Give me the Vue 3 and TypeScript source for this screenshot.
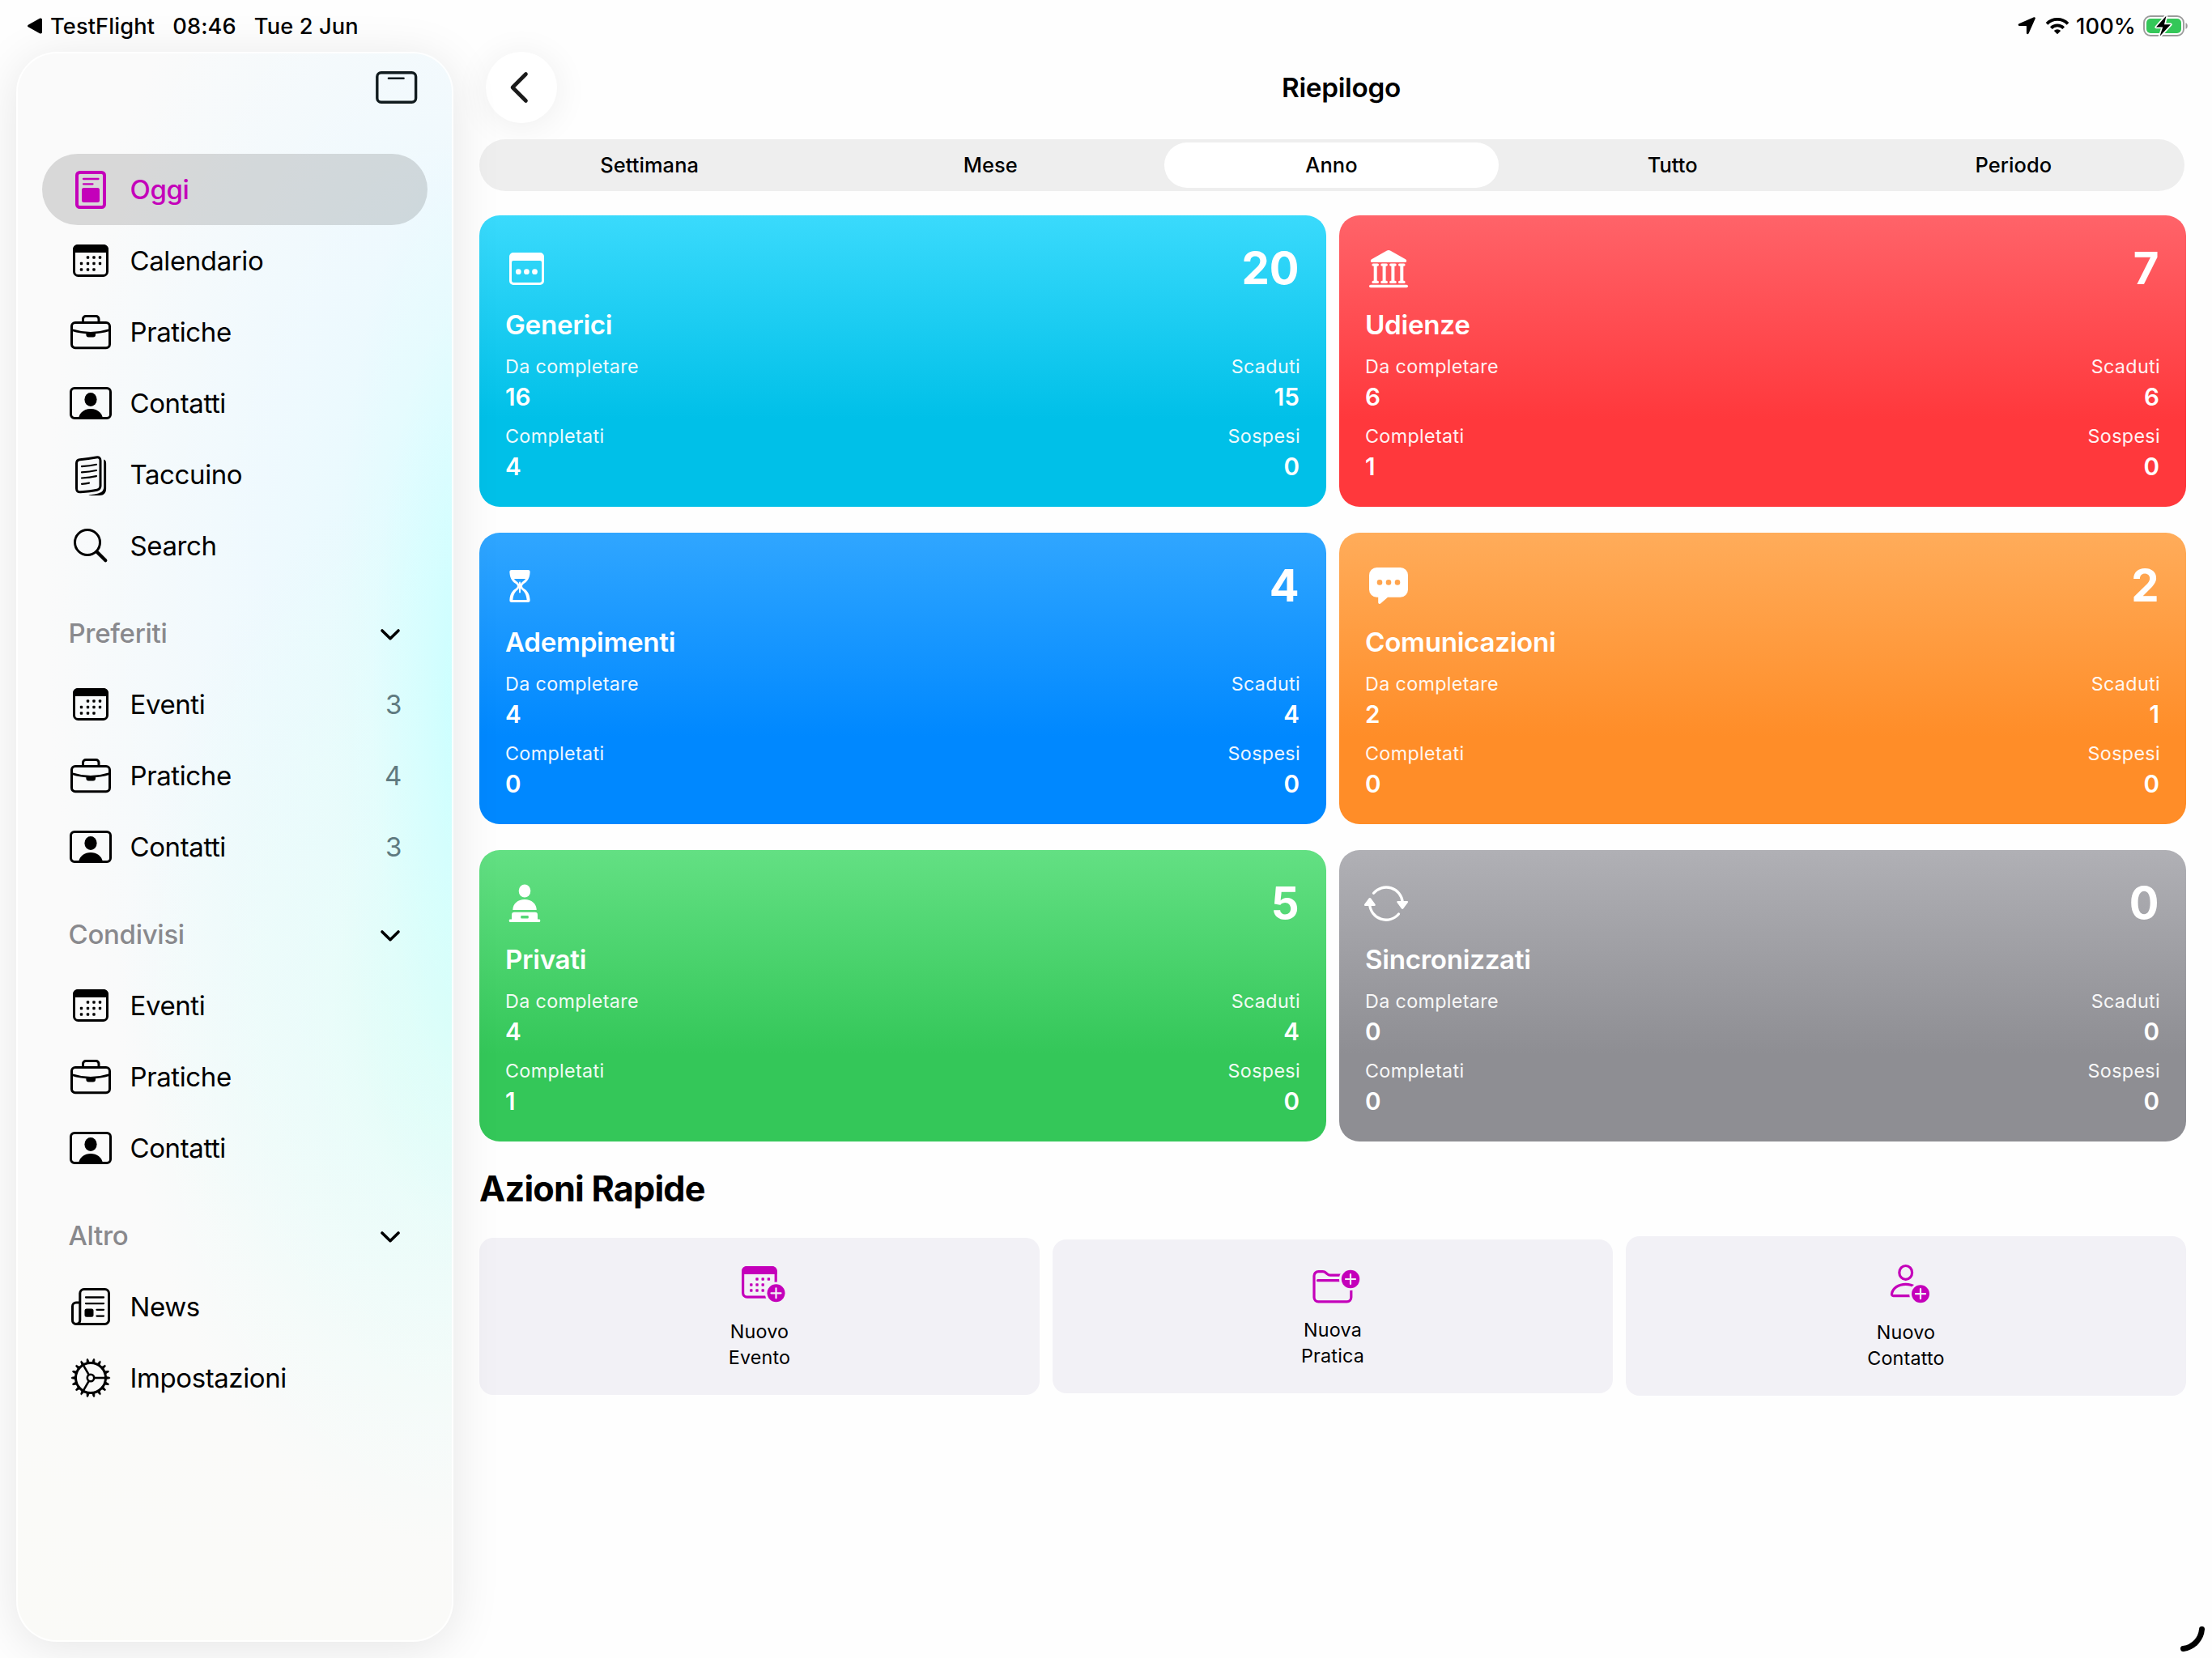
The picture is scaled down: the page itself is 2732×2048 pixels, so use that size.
<script setup lang="ts">
interface NavItem {
  icon: string
  label: string
  count?: number
  active?: boolean
}

interface NavSection {
  title?: string
  items: NavItem[]
}

interface SummaryCard {
  icon: string
  title: string
  tone: string
  total: number
  todo: number
  overdue: number
  done: number
  paused: number
}

const sections: NavSection[] = [
  {
    items: [
      { icon: 'today', label: 'Oggi', active: true },
      { icon: 'calendar', label: 'Calendario' },
      { icon: 'briefcase', label: 'Pratiche' },
      { icon: 'contact', label: 'Contatti' },
      { icon: 'notebook', label: 'Taccuino' },
      { icon: 'search', label: 'Search' },
    ],
  },
  {
    title: 'Preferiti',
    items: [
      { icon: 'calendar', label: 'Eventi', count: 3 },
      { icon: 'briefcase', label: 'Pratiche', count: 4 },
      { icon: 'contact', label: 'Contatti', count: 3 },
    ],
  },
  {
    title: 'Condivisi',
    items: [
      { icon: 'calendar', label: 'Eventi' },
      { icon: 'briefcase', label: 'Pratiche' },
      { icon: 'contact', label: 'Contatti' },
    ],
  },
  {
    title: 'Altro',
    items: [
      { icon: 'news', label: 'News' },
      { icon: 'gear', label: 'Impostazioni' },
    ],
  },
]

const periods: string[] = ['Settimana', 'Mese', 'Anno', 'Tutto', 'Periodo']
const selectedPeriod = 'Anno'

const cards: SummaryCard[] = [
  { icon: 'generic', title: 'Generici', tone: 'cyan', total: 20, todo: 16, overdue: 15, done: 4, paused: 0 },
  { icon: 'court', title: 'Udienze', tone: 'red', total: 7, todo: 6, overdue: 6, done: 1, paused: 0 },
  { icon: 'hourglass', title: 'Adempimenti', tone: 'blue', total: 4, todo: 4, overdue: 4, done: 0, paused: 0 },
  { icon: 'bubble', title: 'Comunicazioni', tone: 'orange', total: 2, todo: 2, overdue: 1, done: 0, paused: 0 },
  { icon: 'person', title: 'Privati', tone: 'green', total: 5, todo: 4, overdue: 4, done: 1, paused: 0 },
  { icon: 'sync', title: 'Sincronizzati', tone: 'gray', total: 0, todo: 0, overdue: 0, done: 0, paused: 0 },
]

const calendarDots: [number, number][] = [
  [24.5, 24], [32, 24], [39.5, 24],
  [16.5, 31.5], [24.5, 31.5], [32, 31.5], [39.5, 31.5],
  [16.5, 39], [24.5, 39], [32, 39],
]

const eventDots: [number, number][] = [
  [23, 20], [30.2, 20], [37.4, 20],
  [15.8, 27], [23, 27], [30.2, 27],
  [15.8, 34], [23, 34], [30.2, 34],
]

const gearTeeth: number[] = Array.from({ length: 18 }, (_, i) => i * 20)
const columns: number[] = [12.7, 23.6, 34.4, 45.3]
</script>

<template>
  <div class="screen">
    <header class="status">
      <div class="status-left">
        <svg class="back-app" width="18" height="20" viewBox="0 0 18 20"><path d="M1.2 8.4 15 .8c1.6-.8 3 0 3 1.7v15c0 1.700-1.400 2.500-3 1.700L1.200 11.600C-.4 10.700-.4 9.300 1.200 8.400z" /></svg>
        <span class="st-app">TestFlight</span>
        <span class="st-time">08:46</span>
        <span class="st-date">Tue 2 Jun</span>
      </div>
      <div class="status-right">
        <svg class="loc" width="22" height="22" viewBox="0 0 22 22"><path d="M20 .3c1.200-.5 2.200.5 1.700 1.700L13.600 20.300c-.7 1.500-2.700 1.200-2.700-.5V11.600c0-.4-.2-.6-.6-.6H2.100C.4 11 .1 9 1.600 8.300z" /></svg>
        <svg class="wifi" width="30" height="22" viewBox="0 0 30 22">
          <path d="M2 8.300a18.500 18.500 0 0 1 26 0" fill="none" stroke="#000" stroke-width="3.800" />
          <path d="M7.300 13.600a11 11 0 0 1 15.400 0" fill="none" stroke="#000" stroke-width="3.800" />
          <path d="M10.800 17a6 6 0 0 1 8.400 0L15 21.200z" />
        </svg>
        <span class="st-pct">100%</span>
        <svg class="battery" width="56" height="28" viewBox="0 0 56 28">
          <rect x="1" y="2" width="49" height="24" rx="8" fill="none" stroke="#9b9b9b" stroke-width="1.900" />
          <path d="M52.500 10.200c3 1 3 6.600 0 7.600z" fill="#9b9b9b" />
          <rect x="4" y="5" width="43" height="18" rx="5" fill="#34c759" />
          <path d="M28.500 1.500 16 15.600h8.200L20.500 26.800 34 12.300h-8z" fill="#000" stroke="#fff" stroke-width="3.400" stroke-linejoin="round" paint-order="stroke" />
        </svg>
      </div>
    </header>

    <div class="body">
      <aside class="sidebar">
        <div class="side-head">
          <svg width="52" height="40" viewBox="0 0 52 40" fill="none" stroke="#111b1e">
            <rect x="1.800" y="1.800" width="47.800" height="36.400" rx="5" stroke-width="3.400" />
            <path d="M16 8.700h18.500" stroke-width="2.600" stroke-linecap="round" />
          </svg>
        </div>
        <section v-for="(section, si) in sections" :key="si">
          <div v-if="section.title" class="section-title">
            <span>{{ section.title }}</span>
            <svg width="24" height="14" viewBox="0 0 24 14" fill="none" stroke="#000" stroke-width="3.600" stroke-linecap="round" stroke-linejoin="round"><path d="M2 2l10 9.700L22 2" /></svg>
          </div>
          <div v-for="item in section.items" :key="item.label" class="nav" :class="{ active: item.active }">
            <svg class="nav-icon" width="56" height="56" viewBox="0 0 56 56" fill="none" stroke="currentColor" stroke-width="3" stroke-linecap="round" stroke-linejoin="round">
              <template v-if="item.icon === 'today'">
                <rect x="11" y="7" width="34" height="43" rx="3.500" stroke-width="4" />
                <path d="M19 15h18.500M19 21.300h11.500" stroke-width="2.300" />
                <rect x="17" y="26" width="22" height="18" rx="2.500" fill="currentColor" stroke="none" />
              </template>
              <template v-else-if="item.icon === 'calendar'">
                <rect x="7.500" y="9.500" width="41" height="37" rx="5" />
                <path d="M6 18v-4a6 6 0 0 1 6-6h32a6 6 0 0 1 6 6v4z" fill="currentColor" stroke="none" />
                <rect v-for="(d, i) in calendarDots" :key="i" :x="d[0] - 1.7" :y="d[1] - 1.7" width="3.400" height="3.400" rx="1" fill="currentColor" stroke="none" />
              </template>
              <template v-else-if="item.icon === 'briefcase'">
                <rect x="4.500" y="16.500" width="47" height="31.200" rx="4.500" />
                <path d="M18.500 16v-4a3.500 3.500 0 0 1 3.500-3.500h12.500a3.500 3.500 0 0 1 3.500 3.500v4" stroke-linecap="butt" />
                <path d="M4.500 25.500q23.500 7.500 47 0" stroke-width="2.600" />
                <path d="M22.400 28.500h11.600v3a3 3 0 0 1-3 3h-5.600a3 3 0 0 1-3-3z" fill="currentColor" stroke="none" />
              </template>
              <template v-else-if="item.icon === 'contact'">
                <rect x="3.500" y="9.500" width="49" height="37" rx="4.500" />
                <ellipse cx="28" cy="23.500" rx="7.600" ry="8.400" fill="currentColor" stroke="none" />
                <path d="M13 46.500c1.500-7.500 7.500-11.600 15-11.600s13.500 4.100 15 11.600z" fill="currentColor" stroke="none" />
              </template>
              <template v-else-if="item.icon === 'notebook'">
                <path d="M10.500 14.300c0-3 1.200-4.300 4.200-4.600 8-.7 13.300-1.400 20-2.700 3.500-.7 5.300.6 5.300 4v31c0 3-1.200 4.500-4.200 5.200-6.500 1.500-13 2.100-20.300 2.500-3.500.2-5-1.200-5-4.400z" />
                <path d="M44.200 9.500c2.200.8 2.900 2.400 2.900 5V45.500c0 5.500-2.800 8.500-8.300 8.500H25.500c0-.8 6-1.100 11.700-2.600 5-1.300 7-3.800 7-8.400z" fill="currentColor" stroke="none" />
                <path d="M17 18.200q10-.6 18-2.400M17 25.400q10-.6 18-2.400M17 32.500q10-.6 18-2.400M17 39.800q5-.2 9-1.200" stroke-width="2.200" />
              </template>
              <template v-else-if="item.icon === 'search'">
                <circle cx="24" cy="24" r="15.500" />
                <path d="M35.500 35.500 46.300 46.300" stroke-width="4.200" />
              </template>
              <template v-else-if="item.icon === 'news'">
                <path d="M9.500 49.500c4 0 5.300-2 5.300-5V11.500a5 5 0 0 1 5-5h25.700a5 5 0 0 1 5 5v33a5 5 0 0 1-5 5zM14.500 23h-4.500a4.500 4.500 0 0 0-4.500 4.500v17a4.500 4.500 0 0 0 4.500 5" />
                <path d="M22 16.500h22M22 24.100h22M35.500 31.800h8.500M35.500 39.600h8.500" stroke-width="2.300" />
                <rect x="20.500" y="30.600" width="11" height="10.200" rx="2.500" fill="currentColor" stroke="none" />
              </template>
              <template v-else>
                <circle cx="28" cy="28" r="18.500" />
                <circle cx="28" cy="28" r="4.200" stroke-width="2.600" />
                <path v-for="a in [0, 120, 240]" :key="'s' + a" d="M32.500 28h13" stroke-width="2.600" stroke-linecap="butt" :transform="`rotate(${a} 28 28)`" />
                <path v-for="a in gearTeeth" :key="a" d="M47 26.400l4 .8a.8.800 0 0 1 0 1.600l-4 .8z" fill="currentColor" stroke-width=".8" :transform="`rotate(${a} 28 28)`" />
              </template>
            </svg>
            <span class="nav-label">{{ item.label }}</span>
            <span v-if="item.count !== undefined" class="nav-count">{{ item.count }}</span>
          </div>
        </section>
      </aside>

      <main class="main">
        <div class="titlebar">
          <div class="back">
            <svg width="24" height="40" viewBox="0 0 24 40" fill="none" stroke="#1a1a1a" stroke-width="4.600" stroke-linecap="round" stroke-linejoin="round"><path d="M20.500 3.500 4 20l16.500 16.500" /></svg>
          </div>
          <h1>Riepilogo</h1>
        </div>

        <div class="segments">
          <div v-for="p in periods" :key="p" class="segment" :class="{ on: p === selectedPeriod }">{{ p }}</div>
        </div>

        <div class="cards">
          <article v-for="c in cards" :key="c.title" class="card" :class="c.tone">
            <div class="card-top">
              <svg width="60" height="68" viewBox="0 0 60 68" fill="#fff">
                <template v-if="c.icon === 'generic'">
                  <path fill-rule="evenodd" d="M10 14h33a5 5 0 0 1 5 5v30a5 5 0 0 1-5 5H10a5 5 0 0 1-5-5V19a5 5 0 0 1 5-5zm0 10a2 2 0 0 0-2 2v22.500a2.500 2.500 0 0 0 2.500 2.500h32a2.500 2.500 0 0 0 2.500-2.500V26a2 2 0 0 0-2-2z" />
                  <circle v-for="x in [16.300, 26.400, 36.500]" :key="x" :cx="x" cy="37.700" r="3.400" />
                </template>
                <template v-else-if="c.icon === 'court'">
                  <path d="M27 11.600q2-1.200 4 0l19 10.700q1.400.8 1.200 2.200-.2 1.500-1.700 1.500H8.500q-1.500 0-1.700-1.500-.2-1.400 1.200-2.200z" />
                  <g v-for="x in columns" :key="x">
                    <rect :x="x - 4.300" y="27.500" width="8.600" height="3.200" rx="1.600" />
                    <rect :x="x - 2" y="29" width="4" height="22" />
                    <rect :x="x - 4.300" y="48.800" width="8.600" height="3.200" rx="1.600" />
                  </g>
                  <rect x="5" y="53.700" width="48" height="3.600" rx="1.800" />
                </template>
                <template v-else-if="c.icon === 'hourglass'">
                  <path fill-rule="evenodd" d="M8 14h20c2 0 2.800 1.200 2.600 3-.5 8-3.600 11.500-7.600 14-2.600 1.700-2.600 4.300 0 6 4 2.500 7.100 6 7.600 14 .2 1.800-.6 3-2.600 3H8c-2 0-2.800-1.200-2.600-3 .5-8 3.600-11.500 7.600-14 2.600-1.700 2.600-4.300 0-6-4-2.500-7.100-6-7.600-14C5.200 15.200 6 14 8 14zm2.900 11c1.300 1.700 2.800 2.800 4.500 4.200 2.700 2.300 2.700 7.100 0 9.400-3.200 2.700-5.200 5.400-6 11.900q-.1.500.5.500h16.200q.6 0 .5-.5c-.8-6.500-2.800-9.200-6-11.900-2.700-2.300-2.700-7.100 0-9.400 1.700-1.400 3.200-2.500 4.500-4.200z" />
                  <rect x="17" y="28.500" width="2" height="14" rx="1" />
                </template>
                <template v-else-if="c.icon === 'bubble'">
                  <path fill-rule="evenodd" d="M14.500 11h29a9.500 9.500 0 0 1 9.500 9.500v17.700a9.500 9.500 0 0 1-9.500 9.500H28l-8.600 7.600c-1.500 1.300-3.200.6-3.200-1.300v-6.300h-1.700A9.500 9.500 0 0 1 5 38.200V20.500A9.500 9.500 0 0 1 14.500 11zM18 26.100a3.300 3.300 0 1 0 0 6.600 3.300 3.300 0 0 0 0-6.600zm11 0a3.300 3.300 0 1 0 0 6.600 3.300 3.300 0 0 0 0-6.600zm11 0a3.300 3.300 0 1 0 0 6.600 3.300 3.300 0 0 0 0-6.600z" />
                </template>
                <template v-else-if="c.icon === 'person'">
                  <ellipse cx="24" cy="18.500" rx="7.300" ry="8" />
                  <path d="M9.300 41.900c0-7.500 6.200-12.900 14.700-12.900s14.700 5.400 14.700 12.900z" />
                  <path fill-rule="evenodd" d="M11.200 44.700h25.600a3.200 3.200 0 0 1 3.200 3.200v5.600h1.700c1 0 1.600.7 1.600 1.700s-.6 1.800-1.600 1.800H6.300c-1 0-1.600-.8-1.600-1.800s.6-1.700 1.600-1.700H8v-5.600a3.200 3.200 0 0 1 3.200-3.200zm9 4.300a1 1 0 0 0-1 1v1.600a1 1 0 0 0 1 1h7.600a1 1 0 0 0 1-1V50a1 1 0 0 0-1-1z" />
                </template>
                <template v-else>
                  <path d="M10.500 21.300a20.300 20.300 0 0 1 35.800 11.200M41.500 47a20.300 20.300 0 0 1-35.800-12" fill="none" stroke="#fff" stroke-width="3.300" stroke-linecap="round" />
                  <path d="M47.300 40.300q-1.200 1.400-2.400 0l-5.300-7.200q-1.200-2 .9-2.100h11.300q2.100.1.900 2.100zM4.700 27.600q1.200-1.400 2.400 0l5.300 7.200q1.200 2-.9 2.100H.2q-2.100-.1-.9-2.100z" />
                </template>
              </svg>
              <strong class="total">{{ c.total }}</strong>
            </div>
            <h2>{{ c.title }}</h2>
            <div class="stats">
              <div class="stat"><span class="k">Da completare</span><span class="v">{{ c.todo }}</span></div>
              <div class="stat end"><span class="k">Scaduti</span><span class="v">{{ c.overdue }}</span></div>
              <div class="stat"><span class="k">Completati</span><span class="v">{{ c.done }}</span></div>
              <div class="stat end"><span class="k">Sospesi</span><span class="v">{{ c.paused }}</span></div>
            </div>
          </article>
        </div>

        <h3>Azioni Rapide</h3>
        <div class="quick">
          <div class="action event">
            <svg width="52" height="52" viewBox="0 0 52 52">
              <rect x="5.600" y="5.600" width="40.600" height="36.500" rx="5" fill="none" stroke="#c400ba" stroke-width="3.200" />
              <path d="M4 14V10a6 6 0 0 1 6-6h31.800a6 6 0 0 1 6 6v4z" fill="#c400ba" />
              <rect v-for="(d, i) in eventDots" :key="i" :x="d[0] - 1.7" :y="d[1] - 1.7" width="3.400" height="3.400" rx=".8" fill="#c400ba" />
              <circle cx="46.500" cy="37.300" r="13.800" fill="#f2f1f6" />
              <circle cx="46.500" cy="37.300" r="11" fill="#c400ba" />
              <path d="M46.500 31.300v12M40.500 37.300h12" stroke="#f2f1f6" stroke-width="2.200" stroke-linecap="round" />
            </svg>
            <p>Nuovo<br />Evento</p>
          </div>
          <div class="action file">
            <svg width="60" height="46" viewBox="0 0 60 46">
              <path d="M11.500 17.700H50M7 38.500V12a5.300 5.300 0 0 1 5.300-5.300h5.500c1.700 0 2.600.4 3.800 1.500l1.600 1.500c1.200 1.100 2 1.500 3.700 1.500H47.500a5.300 5.300 0 0 1 5.300 5.300v22a5.300 5.300 0 0 1-5.300 5.300H12.300A5.300 5.300 0 0 1 7 38.500z" fill="none" stroke="#c400ba" stroke-width="3.200" stroke-linecap="round" stroke-linejoin="round" />
              <circle cx="52" cy="16" r="14" fill="#f2f1f6" />
              <circle cx="52" cy="16" r="11.200" fill="#c400ba" />
              <path d="M52 10v12M46 16h12" stroke="#f2f1f6" stroke-width="2.200" stroke-linecap="round" />
            </svg>
            <p>Nuova<br />Pratica</p>
          </div>
          <div class="action person">
            <svg width="48" height="55" viewBox="0 0 48 55">
              <ellipse cx="23.700" cy="13.900" rx="7.900" ry="8.400" fill="none" stroke="#c400ba" stroke-width="3.200" />
              <path d="M8.500 42.600c-1.500 0-2.200-1-2-2.600C7.700 33.300 14.500 28.400 23.700 28.400S39.700 33.300 41 40c.2 1.600-.5 2.600-2 2.600z" fill="none" stroke="#c400ba" stroke-width="3.200" />
              <circle cx="42" cy="40.200" r="13.800" fill="#f2f1f6" />
              <circle cx="42" cy="40.200" r="11" fill="#c400ba" />
              <path d="M42 34.200v12M36 40.200h12" stroke="#f2f1f6" stroke-width="2.200" stroke-linecap="round" />
            </svg>
            <p>Nuovo<br />Contatto</p>
          </div>
        </div>
      </main>
    </div>

    <svg class="corner" width="34" height="36" viewBox="0 0 34 36" fill="none" stroke="#000" stroke-width="7" stroke-linecap="round"><path d="M29.500 6.500C28.500 18 20 28.500 6.500 30.500" /></svg>
  </div>
</template>

<style>
body {
  margin: 0;
  background: #fefefe;
}
</style>

<style scoped>
.screen {
  position: relative;
  width: 2732px;
  height: 2048px;
  overflow: hidden;
  background: #fefefe;
  color: #000;
  font-family: Inter, "Liberation Sans", sans-serif;
  display: flex;
  flex-direction: column;
}
svg {
  display: block;
  flex: none;
  overflow: visible;
}
h1, h2, h3, p {
  margin: 0;
}
.status {
  position: relative;
  z-index: 2;
  height: 64px;
  display: flex;
  justify-content: space-between;
  font-size: 27.2px;
  font-weight: 500;
  line-height: 65px;
  letter-spacing: 0.15px;
}
.status-left,
.status-right {
  display: flex;
  align-items: center;
}
.status-left {
  padding-left: 34px;
}
.status-right {
  padding-right: 29px;
}
.st-app { margin-left: 10px; }
.st-time { margin-left: 22px; }
.st-date { margin-left: 22px; }
.loc { margin-right: 12px; }
.wifi { margin-right: 8px; }
.battery { margin-left: 9px; }

.body {
  flex: 1;
  display: flex;
  min-height: 0;
}
.sidebar {
  position: relative;
  z-index: 1;
  box-sizing: border-box;
  flex: none;
  width: 540px;
  height: 1964px;
  margin-left: 20px;
  padding: 0 32px;
  border-radius: 50px;
  background:
    radial-gradient(ellipse 32% 36% at 104% 41%, rgba(200, 255, 255, 1) 0%, rgba(208, 255, 255, 0.7) 35%, rgba(220, 254, 255, 0.3) 70%, rgba(228, 252, 255, 0) 100%),
    radial-gradient(ellipse 80% 34% at 104% 60%, rgba(218, 255, 244, 0.95) 0%, rgba(228, 254, 248, 0.6) 40%, rgba(240, 251, 248, 0) 100%),
    radial-gradient(ellipse 98% 50% at 104% 34%, rgba(226, 251, 255, 1) 0%, rgba(236, 249, 255, 0.8) 50%, rgba(244, 249, 254, 0) 100%),
    linear-gradient(20deg, #fafaf7 0%, #fafafa 25%);
  box-shadow: inset 0 0 0 2px rgba(255, 255, 255, 0.85), 0 8px 60px rgba(0, 0, 0, 0.1);
}
.side-head {
  height: 126px;
  box-sizing: border-box;
  padding: 24px 12px 0 0;
  display: flex;
  justify-content: flex-end;
}
.nav {
  height: 88px;
  box-sizing: border-box;
  padding: 0 32px;
  display: flex;
  align-items: center;
  font-size: 33px;
  line-height: 88px;
  letter-spacing: -0.4px;
}
.nav.active {
  border-radius: 44px;
  background: rgba(40, 40, 40, 0.155);
  color: #c400ba;
  font-weight: 500;
}
.nav-label {
  margin-left: 20.5px;
  flex: 1;
}
.nav-count {
  color: #5f7a80;
}
.section-title {
  height: 108px;
  box-sizing: border-box;
  padding: 20px 34px 0 32.5px;
  display: flex;
  align-items: center;
  justify-content: space-between;
  color: #89898d;
  font-size: 33px;
  font-weight: 500;
  letter-spacing: -0.3px;
}
.section-title svg {
  margin-top: 3px;
}

.main {
  width: 2108px;
  margin-left: 32px;
  display: flex;
  flex-direction: column;
}
.titlebar {
  height: 88px;
  padding: 0 75px 0 8px;
  display: flex;
  align-items: center;
}
.back {
  width: 88px;
  height: 88px;
  border-radius: 50%;
  background: #fff;
  box-shadow: 0 4px 44px rgba(0, 0, 0, 0.07);
  display: flex;
  align-items: center;
  justify-content: center;
}
.back svg {
  margin-right: 7px;
}
h1 {
  flex: 1;
  text-align: center;
  font-size: 33.3px;
  line-height: 88px;
  font-weight: 600;
  letter-spacing: -0.3px;
}
.segments {
  box-sizing: border-box;
  width: 2106px;
  height: 64px;
  margin-top: 20px;
  padding: 4px 0;
  border-radius: 32px;
  background: #eeeeee;
  display: flex;
}
.segment {
  flex: 1;
  margin: 0 5px 0 4px;
  border-radius: 28px;
  text-align: center;
  font-size: 25.4px;
  line-height: 56px;
  font-weight: 500;
  letter-spacing: 0.1px;
}
.segment.on {
  background: #fff;
}
.cards {
  margin-top: 30px;
  display: grid;
  grid-template-columns: 1fr 1fr;
  gap: 32px 16px;
}
.card {
  box-sizing: border-box;
  height: 360px;
  padding: 32px;
  border-radius: 25px;
  color: #fff;
}
.cyan { background: linear-gradient(#3adafc, #00c0e8 70%); }
.red { background: linear-gradient(#ff6369, #ff383c 70%); }
.blue { background: linear-gradient(#30a6ff, #0088ff 70%); }
.orange { background: linear-gradient(#ffac5a, #ff8d28 70%); }
.green { background: linear-gradient(#63e083, #34c759 70%); }
.gray { background: linear-gradient(#b0b0b5, #8e8e93 70%); }
.card-top {
  height: 68px;
  display: flex;
  align-items: center;
  justify-content: space-between;
}
.total {
  margin-right: 1.5px;
  font-size: 54.500px;
  line-height: 66px;
  font-weight: 700;
  padding-bottom: 2px;
}
h2 {
  margin-top: 15px;
  font-size: 33.200px;
  line-height: 40px;
  font-weight: 600;
  letter-spacing: -0.3px;
}
.stats {
  margin-top: 17px;
  display: grid;
  grid-template-columns: 1fr 1fr;
  row-gap: 16px;
}
.stat {
  display: flex;
  flex-direction: column;
  gap: 4px;
}
.end {
  align-items: flex-end;
}
.end .v {
  margin-right: 1px;
}
.k {
  font-size: 23.3px;
  line-height: 30px;
  letter-spacing: 0.35px;
  opacity: 0.93;
}
.v {
  font-size: 29.600px;
  line-height: 36px;
  font-weight: 600;
}
h3 {
  margin-top: 28px;
  font-size: 43.2px;
  line-height: 60px;
  font-weight: 700;
  letter-spacing: -0.8px;
}
.quick {
  margin-top: 29px;
  display: flex;
  align-items: center;
  gap: 16px;
}
.action {
  flex: 1;
  box-sizing: border-box;
  padding-bottom: 30px;
  border-radius: 17px;
  background: #f2f1f6;
  display: flex;
  flex-direction: column;
  align-items: center;
  justify-content: flex-end;
}
.event { height: 194px; }
.file { height: 190px; }
.action.person { height: 197px; }
.action p {
  margin-top: 17px;
  font-size: 23.3px;
  line-height: 32px;
  letter-spacing: 0.2px;
  text-align: center;
}
.corner {
  position: absolute;
  left: 2690px;
  top: 2006px;
}
</style>
